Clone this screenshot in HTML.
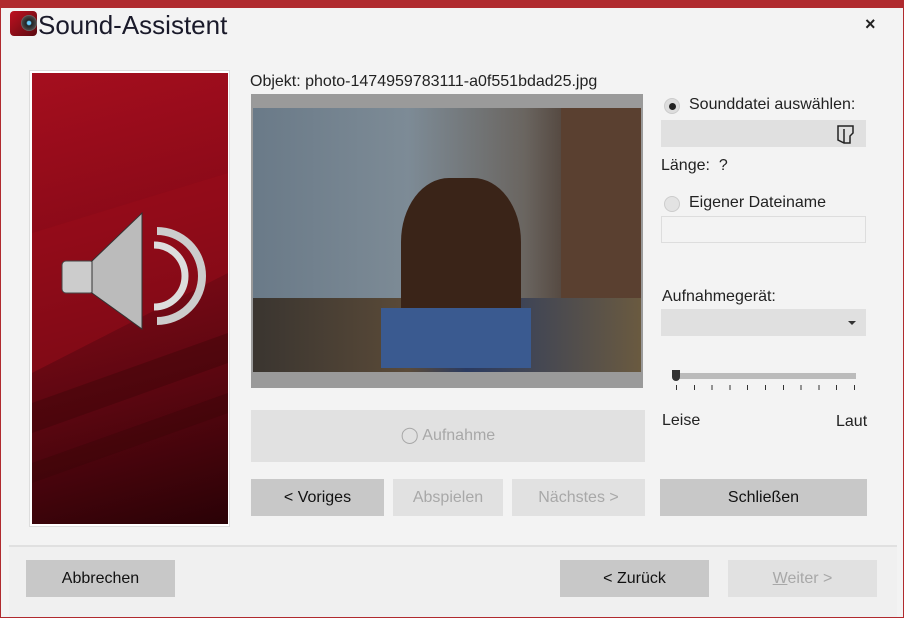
<!DOCTYPE html><html><head><style>
*{margin:0;padding:0;box-sizing:border-box}
body{width:904px;height:618px;background:#b02a2e;font-family:"Liberation Sans",sans-serif;position:relative;overflow:hidden}
.win{position:absolute;left:1px;top:8px;width:902px;height:609px;background:#f3f3f3}
.a{position:absolute}
.btn{position:absolute;background:#c8c8c8;font-size:16px;color:#111;text-align:center}
.dis{background:#e1e1e1;color:#a8a8a8}
.t{position:absolute;font-size:16px;color:#222}
</style></head><body><div class="win">
<div class="a" style="left:9px;top:3px;width:27px;height:25px;border-radius:4px;background:linear-gradient(135deg,#c01020,#5a0a10)"></div>
<div class="a" style="left:20px;top:7px;width:16px;height:16px;border-radius:50%;background:radial-gradient(#6cf 15%,#222 25%,#444 60%,#999 80%)"></div>
<div class="t" style="left:37px;top:2px;font-size:26px;color:#1a1a2a">Sound-Assistent</div>
<div class="t" style="left:864px;top:6px;font-size:18px;font-weight:bold">×</div>
<div class="a" style="left:28px;top:62px;width:201px;height:457px;background:#fff;border:1px solid #ddd"></div>
<div class="a" style="left:31px;top:65px;width:196px;height:451px;background:linear-gradient(165deg,#a50e1e 0%,#8a0a18 35%,#7c0a16 45%,#5a0610 70%,#2a0206 100%)"></div>
<svg class="a" style="left:31px;top:65px" width="196" height="451"><polygon points="0,160 196,100 196,200 0,300" fill="#9a0c1a" opacity=".5"/><polygon points="0,330 196,260 196,290 0,360" fill="#3a0408" opacity=".4"/><polygon points="0,390 196,320 196,340 0,410" fill="#3a0408" opacity=".4"/>
<rect x="30" y="188" width="32" height="32" rx="4" fill="#ccc" stroke="#444"/><polygon points="60,188 110,140 110,256 60,220" fill="#bbb" stroke="#333"/><path d="M122,172 a28,28 0 0 1 0,62" stroke="#ddd" stroke-width="7" fill="none"/><path d="M125,158 a45,45 0 0 1 0,90" stroke="#ccc" stroke-width="8" fill="none"/></svg>
<div class="t" style="left:249px;top:65px">Objekt: photo-1474959783111-a0f551bdad25.jpg</div>
<div class="a" style="left:250px;top:86px;width:392px;height:294px;background:#9a9a9a"></div>
<div class="a" style="left:252px;top:100px;width:388px;height:264px;background:linear-gradient(90deg,#6a7a88 0%,#7d8b96 40%,#6a6560 70%,#4a3a30 85%,#6a5040 100%)"></div>
<div class="a" style="left:560px;top:100px;width:80px;height:264px;background:#5a4030"></div>
<div class="a" style="left:252px;top:290px;width:388px;height:74px;background:linear-gradient(90deg,#3a3530,#5a4a38 40%,#2a3a60 55%,#6a5a40)"></div>
<div class="a" style="left:400px;top:170px;width:120px;height:160px;border-radius:40% 40% 10% 10%;background:#3a2418"></div>
<div class="a" style="left:380px;top:300px;width:150px;height:60px;background:#3a5a90"></div>
<div class="btn dis" style="left:250px;top:402px;width:394px;height:52px;line-height:52px">◯ Aufnahme</div>
<div class="btn" style="left:250px;top:471px;width:133px;height:37px;line-height:37px">&lt; Voriges</div>
<div class="btn dis" style="left:392px;top:471px;width:110px;height:37px;line-height:37px">Abspielen</div>
<div class="btn dis" style="left:511px;top:471px;width:133px;height:37px;line-height:37px">Nächstes &gt;</div>
<div class="btn" style="left:659px;top:471px;width:207px;height:37px;line-height:37px">Schließen</div>
<div class="a" style="left:663px;top:90px;width:16px;height:16px;border-radius:50%;background:#ddd;border:1px solid #ccc"></div><div class="a" style="left:668px;top:95px;width:7px;height:7px;border-radius:50%;background:#222"></div>
<div class="t" style="left:688px;top:88px">Sounddatei auswählen:</div>
<div class="a" style="left:660px;top:112px;width:205px;height:27px;background:#e0e0e0"></div>
<svg class="a" style="left:835px;top:116px" width="20" height="22"><path d="M2,2 H17 V9 L14,12 V19 H8 L2,16 Z M8,5 V19" fill="none" stroke="#222" stroke-width="1.5"/></svg>
<div class="t" style="left:660px;top:149px">Länge: &nbsp;?</div>
<div class="a" style="left:663px;top:188px;width:16px;height:16px;border-radius:50%;background:#e3e3e3;border:1px solid #ccc"></div>
<div class="t" style="left:688px;top:186px">Eigener Dateiname</div>
<div class="a" style="left:660px;top:208px;width:205px;height:27px;border:1px solid #ddd;background:#f3f3f3"></div>
<div class="t" style="left:661px;top:280px">Aufnahmegerät:</div>
<div class="a" style="left:660px;top:301px;width:205px;height:27px;background:#e0e0e0"></div>
<div class="a" style="left:847px;top:313px;border:4px solid transparent;border-top:4px solid #333;border-bottom:0"></div>
<div class="a" style="left:673px;top:365px;width:182px;height:6px;background:#bbb"></div>
<div class="a" style="left:671px;top:362px;width:8px;height:11px;background:#333;border-radius:0 0 4px 4px"></div>
<div class="a" style="left:675px;top:377px;width:180px;height:5px;background:repeating-linear-gradient(90deg,#333 0 1px,transparent 1px 17.8px)"></div>
<div class="t" style="left:661px;top:404px">Leise</div>
<div class="t" style="left:835px;top:405px">Laut</div>
<div class="a" style="left:8px;top:537px;width:888px;height:72px;background:#f0f0f0;border-top:2px solid #e0e0e0"></div>
<div class="btn" style="left:25px;top:552px;width:149px;height:37px;line-height:37px">Abbrechen</div>
<div class="btn" style="left:559px;top:552px;width:149px;height:37px;line-height:37px">&lt; Zurück</div>
<div class="btn dis" style="left:727px;top:552px;width:149px;height:37px;line-height:37px"><u>W</u>eiter &gt;</div>
</div></body></html>
